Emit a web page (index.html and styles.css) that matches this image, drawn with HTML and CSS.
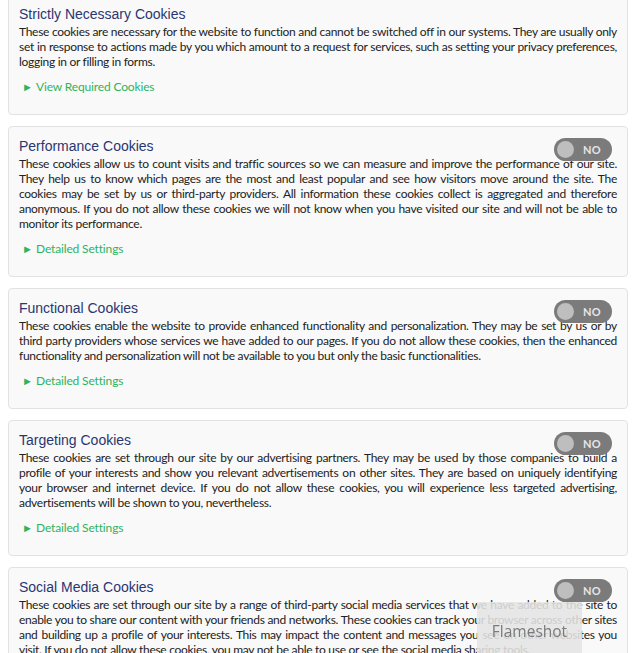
FILE: index.html
```html
<!DOCTYPE html>
<html><head><meta charset="utf-8"><link rel="stylesheet" href="styles.css"></head>
<body>
<div class="list">
  <section class="card">
    <div class="head"><h3 class="title">Strictly Necessary Cookies</h3></div>
    <p class="desc">These cookies are necessary for the website to function and cannot be switched off in our systems. They are usually only set in response to actions made by you which amount to a request for services, such as setting your privacy preferences, logging in or filling in forms.</p>
    <a class="more"><span class="arrow">►</span>View Required Cookies</a>
  </section>
  <section class="card">
    <div class="head"><h3 class="title">Performance Cookies</h3><span class="toggle"><span class="knob"></span><span class="no">NO</span></span></div>
    <p class="desc">These cookies allow us to count visits and traffic sources so we can measure and improve the performance of our site. They help us to know which pages are the most and least popular and see how visitors move around the site. The cookies may be set by us or third-party providers. All information these cookies collect is aggregated and therefore anonymous. If you do not allow these cookies we will not know when you have visited our site and will not be able to monitor its performance.</p>
    <a class="more"><span class="arrow">►</span>Detailed Settings</a>
  </section>
  <section class="card">
    <div class="head"><h3 class="title">Functional Cookies</h3><span class="toggle"><span class="knob"></span><span class="no">NO</span></span></div>
    <p class="desc">These cookies enable the website to provide enhanced functionality and personalization. They may be set by us or by third party providers whose services we have added to our pages. If you do not allow these cookies, then the enhanced functionality and personalization will not be available to you but only the basic functionalities.</p>
    <a class="more"><span class="arrow">►</span>Detailed Settings</a>
  </section>
  <section class="card">
    <div class="head"><h3 class="title">Targeting Cookies</h3><span class="toggle"><span class="knob"></span><span class="no">NO</span></span></div>
    <p class="desc">These cookies are set through our site by our advertising partners. They may be used by those companies to build a profile of your interests and show you relevant advertisements on other sites. They are based on uniquely identifying your browser and internet device. If you do not allow these cookies, you will experience less targeted advertising, advertisements will be shown to you, nevertheless.</p>
    <a class="more"><span class="arrow">►</span>Detailed Settings</a>
  </section>
  <section class="card">
    <div class="head"><h3 class="title">Social Media Cookies</h3><span class="toggle"><span class="knob"></span><span class="no">NO</span></span></div>
    <p class="desc">These cookies are set through our site by a range of third-party social media services that we have added to the site to enable you to share our content with your friends and networks. These cookies can track your browser across other sites and building up a profile of your interests. This may impact the content and messages you see on other websites you visit. If you do not allow these cookies, you may not be able to use or see the social media sharing tools.</p>
    <a class="more"><span class="arrow">►</span>Detailed Settings</a>
  </section>
</div>
<div class="flameshot">Flameshot</div>
</body></html>
```
FILE: styles.css
```css
html,body{margin:0;background:#fff}
body{font-family:Lato,"Liberation Sans",sans-serif;color:#222;overflow:hidden;height:653px}
.list{padding:0 12px 0 8px;margin-top:-6px;display:flex;flex-direction:column;gap:11px}
.card{border:1px solid #e2e2e2;border-radius:4px;background:#f9f9f9;padding:10px 10px 20px 10px}
.head{display:flex;justify-content:space-between;align-items:flex-start;height:19px}
.title{margin:0;font:14px/19px "Liberation Sans",Arial,sans-serif;color:#2a3671}
.toggle{position:relative;z-index:1;display:flex;align-items:center;width:58px;height:23px;margin:1px 5px 0 0;border-radius:12px;background:#7b7b7b;flex:none}
.knob{width:17px;height:17px;border-radius:50%;background:#bebebe;margin-left:3px;flex:none}
.no{flex:1;text-align:center;font:bold 11px/23px Lato,sans-serif;color:#e6e6e6;padding-right:2px;letter-spacing:.3px}
.desc{margin:0;font-size:12px;line-height:15px;letter-spacing:-.29px;text-align:justify}
.more{display:block;margin-top:10px;font-size:12px;line-height:15px;color:#2fb35c;letter-spacing:-.15px}
.arrow{display:inline-block;width:14px;margin-left:3px;font-size:11px}
.flameshot{position:fixed;left:477px;top:602px;width:105px;height:60px;background:rgba(228,228,228,.88);color:#7a7a7a;font:15.5px/58px "Open Sans",sans-serif;text-align:center}
```
